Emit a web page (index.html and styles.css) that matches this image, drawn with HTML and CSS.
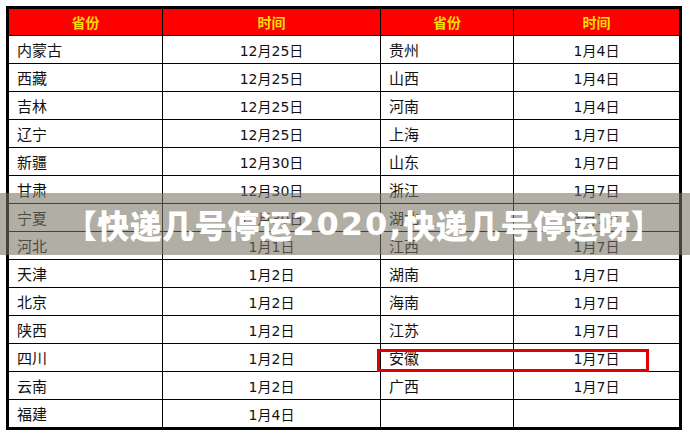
FILE: index.html
```html
<!DOCTYPE html>
<html lang="zh">
<head>
<meta charset="utf-8">
<link rel="stylesheet" href="styles.css">
</head>
<body>
<div class="page">
  <div class="sheet">
    <div class="cell head">省份</div><div class="cell head">时间</div><div class="cell head">省份</div><div class="cell head">时间</div>
    <div class="cell name">内蒙古</div><div class="cell date">12月25日</div><div class="cell name">贵州</div><div class="cell date">1月4日</div>
    <div class="cell name">西藏</div><div class="cell date">12月25日</div><div class="cell name">山西</div><div class="cell date">1月4日</div>
    <div class="cell name">吉林</div><div class="cell date">12月25日</div><div class="cell name">河南</div><div class="cell date">1月4日</div>
    <div class="cell name">辽宁</div><div class="cell date">12月25日</div><div class="cell name">上海</div><div class="cell date">1月7日</div>
    <div class="cell name">新疆</div><div class="cell date">12月30日</div><div class="cell name">山东</div><div class="cell date">1月7日</div>
    <div class="cell name">甘肃</div><div class="cell date">12月30日</div><div class="cell name">浙江</div><div class="cell date">1月7日</div>
    <div class="cell name">宁夏</div><div class="cell date">12月30日</div><div class="cell name">湖北</div><div class="cell date">1月7日</div>
    <div class="cell name">河北</div><div class="cell date">1月1日</div><div class="cell name">江西</div><div class="cell date">1月7日</div>
    <div class="cell name">天津</div><div class="cell date">1月2日</div><div class="cell name">湖南</div><div class="cell date">1月7日</div>
    <div class="cell name">北京</div><div class="cell date">1月2日</div><div class="cell name">海南</div><div class="cell date">1月7日</div>
    <div class="cell name">陕西</div><div class="cell date">1月2日</div><div class="cell name">江苏</div><div class="cell date">1月7日</div>
    <div class="cell name">四川</div><div class="cell date">1月2日</div><div class="cell name">安徽</div><div class="cell date">1月7日</div>
    <div class="cell name">云南</div><div class="cell date">1月2日</div><div class="cell name">广西</div><div class="cell date">1月7日</div>
    <div class="cell name">福建</div><div class="cell date">1月4日</div><div class="cell name"></div><div class="cell date"></div>
  </div>
  <div class="mark"></div>
  <div class="banner">【快递几号停运<span class="num">2020,</span>快递几号停运呀】</div>
</div>
</body>
</html>
```

FILE: styles.css
```css
html, body {
  margin: 0;
  padding: 0;
  background: #ffffff;
}
.page {
  position: relative;
  width: 690px;
  height: 448px;
  padding: 6px 0 0 6px;
  box-sizing: border-box;
  font-family: "DejaVu Sans", "Noto Sans CJK SC", sans-serif;
}
.sheet {
  width: 670px;
  border: 3px solid #000;
  background: #000;
  display: grid;
  grid-template-columns: 153px 217px 132px 165px;
  grid-template-rows: 26px repeat(14, 27px);
  gap: 1px;
}
.cell {
  background: #fff;
  font-size: 14px;
  color: #111;
  display: flex;
  align-items: center;
  white-space: nowrap;
}
.head {
  background: #ff0000;
  color: #ffdc00;
  font-weight: bold;
  justify-content: center;
  font-family: "Noto Sans CJK SC", sans-serif;
  font-size: 14px;
}
.name {
  padding-left: 8px;
  font-family: "Noto Sans CJK SC", sans-serif;
  font-size: 15px;
}
.date {
  justify-content: center;
}
.mark {
  position: absolute;
  left: 377px;
  top: 349px;
  width: 272px;
  height: 23px;
  border: 3px solid #e00000;
  box-sizing: border-box;
}
.banner {
  position: absolute;
  left: 0;
  top: 193px;
  width: 690px;
  height: 62px;
  background: rgba(120, 116, 100, 0.58);
  color: #fff;
  font-family: "Noto Sans CJK SC", sans-serif;
  font-weight: 900;
  font-size: 32px;
  letter-spacing: 0.5px;
  display: flex;
  align-items: center;
  justify-content: center;
  padding-left: 38px;
  box-sizing: border-box;
  white-space: nowrap;
}
.num {
  font-family: "DejaVu Sans", sans-serif;
  font-weight: bold;
  letter-spacing: 2px;
}
```
